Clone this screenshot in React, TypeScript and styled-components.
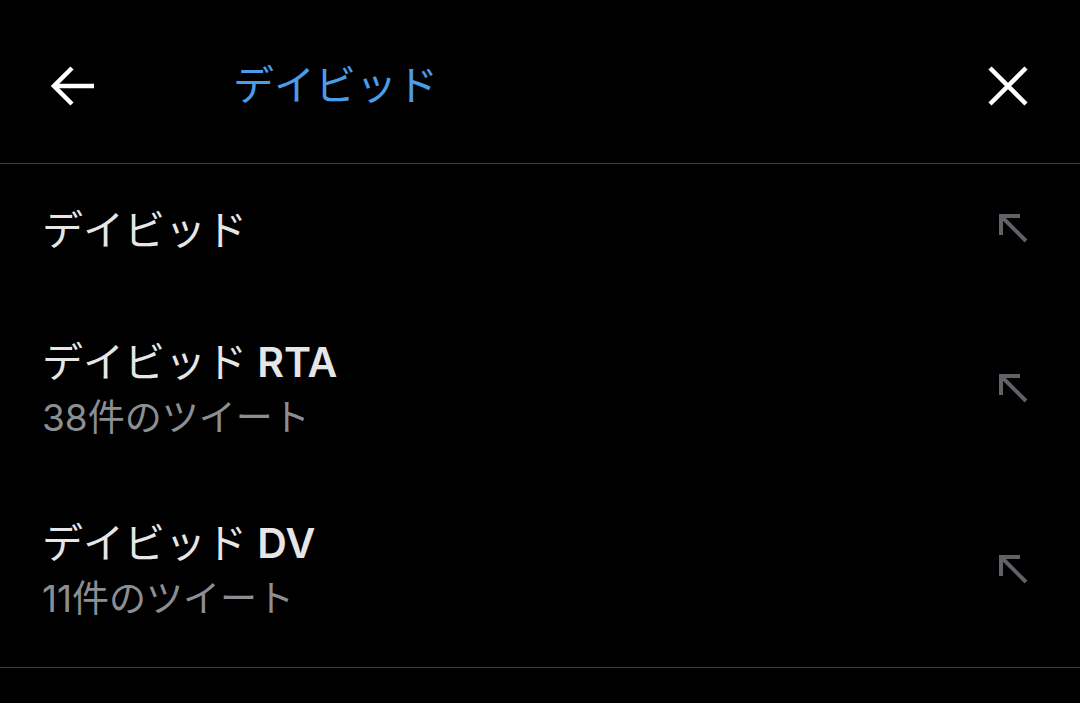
import React from "react";
import styled, {createGlobalStyle} from "styled-components";

const GlobalStyle = createGlobalStyle`
  html, body {
    margin: 0;
    padding: 0;
    background: #000;
  }
  body {
    font-family: "Inter", "Noto Sans CJK JP", sans-serif;
  }
`

type Suggestion = {
    label: string
    suffix?: string
    count?: number
}

const suggestions: Suggestion[] = [
    {label: 'デイビッド'},
    {label: 'デイビッド', suffix: 'RTA', count: 38},
    {label: 'デイビッド', suffix: 'DV', count: 11},
]

const BackIcon = () => (
    <svg width="44" height="42" viewBox="0 0 44 42" fill="none" stroke="#fff" strokeWidth="4.5" strokeLinejoin="miter">
        <line x1="4" y1="21" x2="43" y2="21" />
        <polyline points="21,3 3,21 21,39" />
    </svg>
)

const CloseIcon = () => (
    <svg width="40" height="40" viewBox="0 0 40 40" fill="none" stroke="#fff" strokeWidth="4.5">
        <line x1="2" y1="2" x2="38" y2="38" />
        <line x1="38" y1="2" x2="2" y2="38" />
    </svg>
)

const FillIcon = () => (
    <svg width="30" height="30" viewBox="0 0 30 30" fill="none" stroke="#5f6266" strokeWidth="4">
        <line x1="4" y1="4" x2="28" y2="28" />
        <polyline points="3,22 3,3 22,3" />
    </svg>
)

export default function App() {
    return (
        <Root>
            <GlobalStyle />
            <Header>
                <IconButton aria-label="back">
                    <BackIcon />
                </IconButton>
                <Query>デイビッド</Query>
                <IconButton aria-label="close">
                    <CloseIcon />
                </IconButton>
            </Header>
            <List>
                {suggestions.map((s, i) => (
                    <Row key={i}>
                        <Texts>
                            <Primary>
                                {s.label}
                                {s.suffix && <Suffix> {s.suffix}</Suffix>}
                            </Primary>
                            {s.count !== undefined && <Secondary>{s.count}件のツイート</Secondary>}
                        </Texts>
                        <IconSlot>
                            <FillIcon />
                        </IconSlot>
                    </Row>
                ))}
            </List>
        </Root>
    )
}

const Root = styled.div`
  width: 1080px;
  height: 703px;
  background: #000;
  overflow: hidden;
`

const Header = styled.div`
  height: 155px;
  padding: 8px 52px 0 51px;
  display: grid;
  grid-template-columns: 182px 1fr auto;
  align-items: center;
  border-bottom: 1px solid #3a3a3c;
`

const IconButton = styled.div`
  display: flex;
  align-items: center;
  justify-content: flex-start;
`

const Query = styled.div`
  color: #4a9de6;
  font-size: 41px;
  font-weight: 400;
  line-height: 1;
`

const List = styled.div`
  display: flex;
  flex-direction: column;
  padding-bottom: 9px;
  border-bottom: 1px solid #3a3a3c;
`

const Row = styled.div`
  display: flex;
  align-items: center;
  justify-content: space-between;
  padding: 38px 52px 31px 42px;
  &:first-child {
    padding-bottom: 38px;
  }
`

const Texts = styled.div`
  display: flex;
  flex-direction: column;
`

const Primary = styled.div`
  color: #e6e6e6;
  font-size: 41px;
  line-height: 56px;
`

const Suffix = styled.span`
  font-weight: 600;
`

const Secondary = styled.div`
  color: #8b8e93;
  font-size: 37px;
  line-height: 56px;
`

const IconSlot = styled.div`
  display: flex;
  margin-bottom: 5px;
`
